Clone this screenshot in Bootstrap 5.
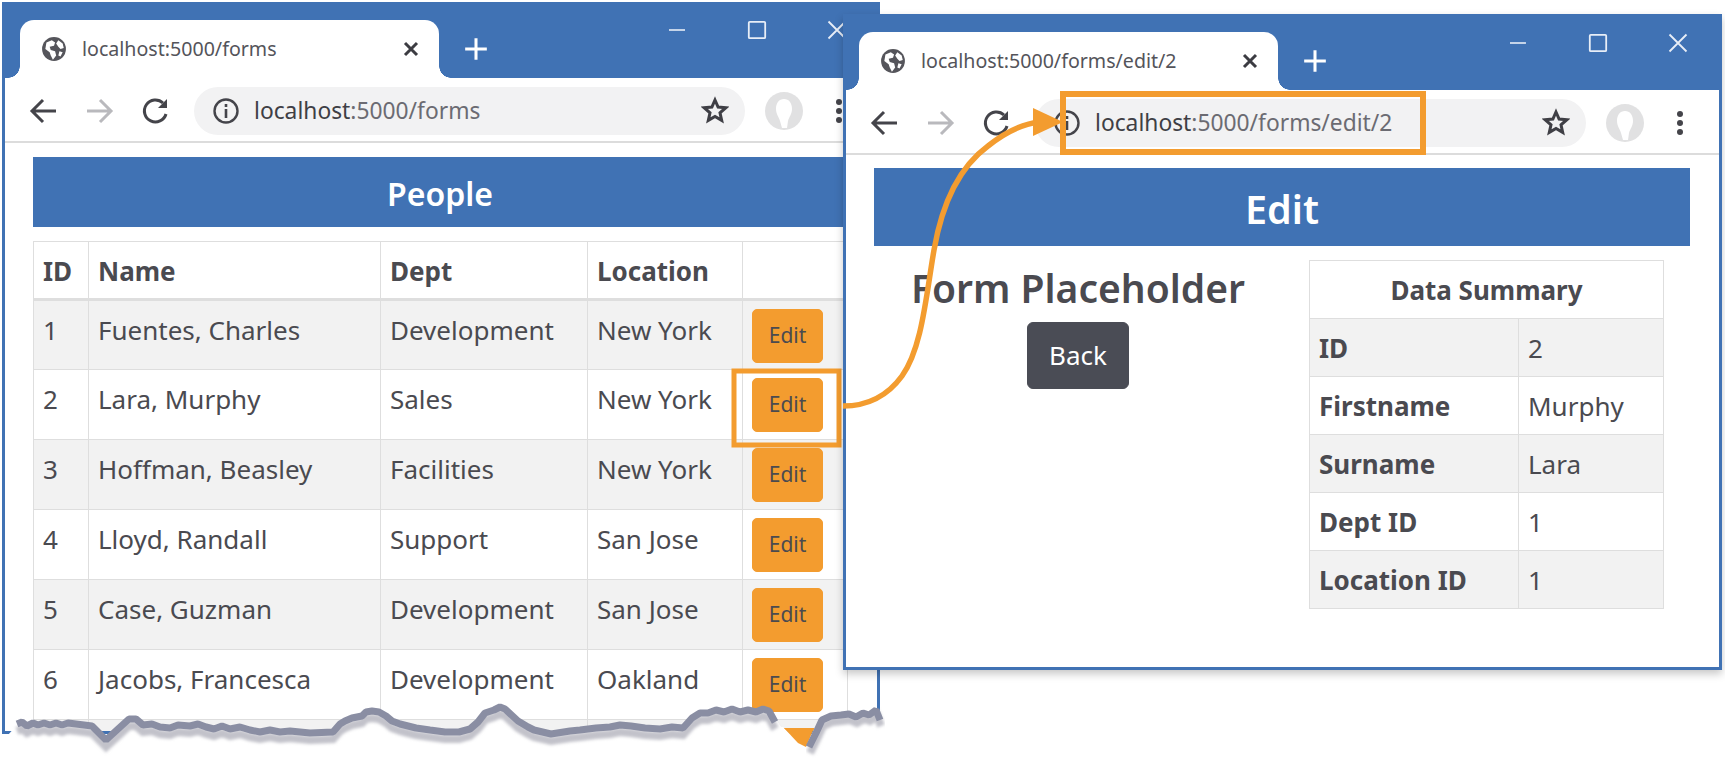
<!DOCTYPE html>
<html lang="en">
<head>
<meta charset="utf-8">
<title>Forms</title>
<link href="https://cdn.jsdelivr.net/npm/bootstrap@5.3.0/dist/css/bootstrap.min.css" rel="stylesheet">
<style>
:root{--chrome:#4072b4;--ink:#4a4a50;--amber:#f39c2f}
html,body{margin:0;background:#fff;overflow:hidden}
body{font-family:"Noto Sans","Open Sans",sans-serif;color:var(--ink)}
.desk{position:relative;width:1725px;height:759px;overflow:hidden}
.win{position:absolute;display:flex;flex-direction:column;background:#fff;border:solid var(--chrome);border-width:0 3px 3px 3px}
.win-a{left:2px;top:2px;width:878px;height:732px}
.win-b{left:843px;top:14px;width:879px;height:656px;box-shadow:0 4px 8px rgba(0,0,0,.22)}
.tabstrip{height:76px;background:var(--chrome);display:flex;align-items:flex-end;flex:none;margin:0 -3px}
.win-a .tabstrip{padding-left:18px}
.win-b .tabstrip{padding-left:16px;height:76px}
.tabx{position:relative;width:419px;height:58px;background:#fff;border-radius:14px 14px 0 0;display:flex;align-items:center;padding:0 16px 0 22px;font-size:19.600px;color:#54545a;flex:none}
.tabx::before,.tabx::after{content:"";position:absolute;bottom:0;width:12px;height:12px}
.tabx::before{left:-12px;background:radial-gradient(circle at 0 0,var(--chrome) 11.5px,#fff 12px)}
.tabx::after{right:-12px;background:radial-gradient(circle at 100% 0,var(--chrome) 11.5px,#fff 12px)}
.tabx .fav{width:26px;height:26px;margin-right:15px;margin-left:-1px;margin-top:-1px;flex:none}
.tabx .ttl{flex:1;white-space:nowrap}
.newtab{margin:0 0 16px 24px;width:26px;height:26px;flex:none}
.winctl{margin-left:auto;display:flex;align-self:flex-start;gap:56px;padding:17px 32px 0 0}
.win-a .winctl{padding-right:31px;padding-top:16px}
.winctl svg{width:24px;height:24px;display:block}
.toolbar{height:65px;flex:none;display:flex;align-items:center;border-bottom:2px solid #dcdcdc;padding:2px 0 0 23px;position:relative}
.tb-ic{width:32px;height:32px;flex:none;margin-right:24px}
.tb-fwd{margin-left:-1px}
.tb-rel{margin-left:1px}
.pill{flex:none;width:551px;height:48px;border-radius:24px;background:#f2f2f3;display:flex;align-items:center;padding:0 16px 0 18px;margin-left:-2px;font-size:22.800px;color:#3f3f45}
.pill .info{width:28px;height:28px;margin-right:14px;flex:none}
.pill .addr{flex:1;white-space:nowrap;padding-top:1px}
.pill .addr span{color:#6b6b72}
.pill .stx{width:28px;height:28px;flex:none;margin-top:-2px}
.prof{width:40px;height:40px;margin-left:19px;flex:none}
.dots{width:24px;height:32px;margin-left:23px;flex:none}
.pagearea{padding:14px 30px 0 28px;flex:1;min-height:0;overflow:hidden}
.win-b .pagearea{padding:13px 29px 0 28px}
.banner{background:var(--chrome);color:#fff;text-align:center;font-weight:600;display:flex;align-items:center;justify-content:center}
.win-a .banner{height:70px;font-size:32px;margin-bottom:14px;padding-top:4px}
.win-b .banner{height:78px;font-size:39.500px;margin-bottom:14px;padding-top:6px}
.tbl{table-layout:fixed;margin:0;color:var(--ink);--bs-table-color:var(--ink);--bs-table-striped-color:var(--ink);--bs-table-striped-bg:#f2f2f2;--bs-table-border-color:#dedede;border-width:2px;border-color:#dedede}
.tbl>*>*>*{border-width:1px 2px 2px 1px;border-color:#dedede}
.people{width:815px;font-size:26px}
.people th,.people td{height:70px;padding:13px 9px 11px;line-height:32px;vertical-align:top}
.people thead th{height:58px;padding:13px 9px 5px;font-weight:700;border-bottom-width:3px}
.people td:last-child{padding:8px 9px 5px}
.cid{width:55px}.cname{width:292px}.cdept{width:207px}.cloc{width:155px}
.btn-edit{--bs-btn-bg:var(--amber);--bs-btn-border-color:var(--amber);--bs-btn-color:#4a4a50;--bs-btn-hover-bg:var(--amber);--bs-btn-hover-border-color:var(--amber);--bs-btn-hover-color:#4a4a50;width:71px;height:54px;font-size:21px;padding:0;border-radius:5px;display:flex;align-items:center;justify-content:center}
.split{display:flex;gap:27px}
.formside{width:408px;flex:none;text-align:center}
.formside h2{font-size:39px;font-weight:600;margin:0 0 6px;line-height:56px;color:var(--ink)}
.btn-back{--bs-btn-bg:#4a4c55;--bs-btn-border-color:#4a4c55;--bs-btn-color:#fff;--bs-btn-hover-bg:#4a4c55;--bs-btn-hover-border-color:#4a4c55;--bs-btn-hover-color:#fff;width:102px;height:67px;font-size:26px;padding:0;border-radius:6px;display:inline-flex;align-items:center;justify-content:center}
.summary{width:355px;font-size:26px;flex:none}
.summary th,.summary td{height:58px;padding:9px 9px;line-height:36px;vertical-align:middle}
.summary thead th{text-align:center}
.col-k{width:209px}
.overlay{position:absolute;left:0;top:0;pointer-events:none}
</style>
</head>
<body>
<svg width="0" height="0" class="position-absolute">
<defs>
<symbol id="i-globe" viewBox="0 0 24 24"><circle cx="12" cy="12" r="11" fill="#55555b"/><path d="M5 6l5-2 3 2-1 3-4 1 1 3 4 1 1 4-3 4-2-4-1-3-4-3zM16 4l4 3 1 4-3 1-2-2-2-3zM17 14l3 1-2 4-2-1z" fill="#fff"/></symbol>
<symbol id="i-close" viewBox="0 0 24 24"><path d="M6 6l12 12M18 6L6 18" stroke="#3c3c42" stroke-width="3" fill="none"/></symbol>
<symbol id="i-plus" viewBox="0 0 24 24"><path d="M12 2v20M2 12h20" stroke="#fff" stroke-width="2.800" fill="none"/></symbol>
<symbol id="i-min" viewBox="0 0 24 24"><path d="M4 12h16" stroke="#e8eef7" stroke-width="1.6"/></symbol>
<symbol id="i-max" viewBox="0 0 24 24"><rect x="3.800" y="3.800" width="16.400" height="16.400" rx="1" fill="none" stroke="#e8eef7" stroke-width="1.800"/></symbol>
<symbol id="i-x" viewBox="0 0 24 24"><path d="M3.500 3.500l17 17M20.500 3.500l-17 17" stroke="#e8eef7" stroke-width="1.800" fill="none"/></symbol>
<symbol id="i-back" viewBox="0 0 32 32"><path d="M28 16H5M15 5L4 16l11 11" stroke="#44444a" stroke-width="3" fill="none"/></symbol>
<symbol id="i-fwd" viewBox="0 0 32 32"><path d="M4 16h23M17 5l11 11-11 11" stroke="#b9b9bd" stroke-width="3" fill="none"/></symbol>
<symbol id="i-reload" viewBox="0 0 32 32"><path d="M26 19a11 11 0 1 1-3-11" stroke="#44444a" stroke-width="3" fill="none"/><path d="M27 4v9H18z" fill="#44444a"/></symbol>
<symbol id="i-info" viewBox="0 0 28 28"><circle cx="14" cy="14" r="11.5" fill="none" stroke="#44444a" stroke-width="2.4"/><path d="M14 12v9M14 7v3" stroke="#44444a" stroke-width="2.6"/></symbol>
<symbol id="i-star" viewBox="0 0 28 28"><path d="M14 4l3.100 7 7.700.7-5.800 5.100 1.700 7.600-6.700-4-6.700 4 1.700-7.600-5.800-5.100 7.700-.7z" fill="none" stroke="#3f3f45" stroke-width="3"/></symbol>
<symbol id="i-prof" viewBox="0 0 40 40"><circle cx="20" cy="20" r="19" fill="#e1e1e2"/><path d="M20 8c5 0 8 4 8 10 0 5-3 8-4 12l-1 7h-5l-2-7c-1-4-4-7-4-12 0-6 3-10 8-10z" fill="#fff"/></symbol>
<symbol id="i-dots" viewBox="0 0 24 32"><circle cx="12" cy="7" r="3" fill="#44444a"/><circle cx="12" cy="16" r="3" fill="#44444a"/><circle cx="12" cy="25" r="3" fill="#44444a"/></symbol>
<polyline id="tear-a" points="17,721 22,719 27,723 33,720 38,722 44,720 50,722 56,720 62,722 68,720 76,721 92,723 106,737 118,726 129,716 136,716 143,722 152,721 160,724 170,725 178,722 190,723 198,721 206,724 214,726 222,723 230,726 240,724 250,727 260,729 270,727 280,729 290,728 310,730 333,729 340,721 345,718 352,715 362,713 366,709 372,708 379,709 386,713 392,718 400,721 408,723 416,725 430,727 445,729 459,729 470,726 478,719 485,710 494,707 500,704 505,706 518,718 528,724 534,727 551,731 570,728 580,727 596,725 610,724 620,722 631,723 645,725 660,726 672,724 683,725 692,715 700,710 708,710 716,707 724,709 732,706 740,709 748,707 756,709 763,706 769,708 775,719"/>
<polyline id="tear-b" points="808,744 815,730 821,717 830,713 840,712 848,711 855,714 862,710 868,712 875,707 879,717"/>
</defs>
</svg>

<div class="desk">

  <section class="win win-a">
    <div class="tabstrip">
      <div class="tabx"><svg class="fav"><use href="#i-globe"/></svg><span class="ttl">localhost:5000/forms</span><svg width="24" height="24"><use href="#i-close"/></svg></div>
      <svg class="newtab"><use href="#i-plus"/></svg>
      <div class="winctl"><svg><use href="#i-min"/></svg><svg><use href="#i-max"/></svg><svg><use href="#i-x"/></svg></div>
    </div>
    <div class="toolbar">
      <svg class="tb-ic"><use href="#i-back"/></svg><svg class="tb-ic tb-fwd"><use href="#i-fwd"/></svg><svg class="tb-ic tb-rel"><use href="#i-reload"/></svg>
      <div class="pill"><svg class="info"><use href="#i-info"/></svg><span class="addr">localhost<span>:5000/forms</span></span><svg class="stx"><use href="#i-star"/></svg></div>
      <svg class="prof"><use href="#i-prof"/></svg><svg class="dots"><use href="#i-dots"/></svg>
    </div>
    <div class="pagearea">
      <div class="banner">People</div>
      <table class="table table-striped table-bordered tbl people">
        <colgroup><col class="cid"><col class="cname"><col class="cdept"><col class="cloc"><col></colgroup>
        <thead><tr><th>ID</th><th>Name</th><th>Dept</th><th>Location</th><th></th></tr></thead>
        <tbody>
          <tr><td>1</td><td>Fuentes, Charles</td><td>Development</td><td>New York</td><td><a class="btn btn-edit">Edit</a></td></tr>
          <tr><td>2</td><td>Lara, Murphy</td><td>Sales</td><td>New York</td><td><a class="btn btn-edit">Edit</a></td></tr>
          <tr><td>3</td><td>Hoffman, Beasley</td><td>Facilities</td><td>New York</td><td><a class="btn btn-edit">Edit</a></td></tr>
          <tr><td>4</td><td>Lloyd, Randall</td><td>Support</td><td>San Jose</td><td><a class="btn btn-edit">Edit</a></td></tr>
          <tr><td>5</td><td>Case, Guzman</td><td>Development</td><td>San Jose</td><td><a class="btn btn-edit">Edit</a></td></tr>
          <tr><td>6</td><td>Jacobs, Francesca</td><td>Development</td><td>Oakland</td><td><a class="btn btn-edit">Edit</a></td></tr>
          <tr><td></td><td></td><td></td><td></td><td><a class="btn btn-edit"></a></td></tr>
        </tbody>
      </table>
    </div>
  </section>

  <svg class="overlay" width="1725" height="759" viewBox="0 0 1725 759">
    <defs><filter id="soft" x="-5%" y="-50%" width="110%" height="200%"><feGaussianBlur stdDeviation="1.600"/></filter></defs>
    <polygon fill="#fff" points="0,735 8,735 17,725 40,722 60,721 78,722 92,724 106,738 118,727 129,717 136,717 143,723 170,726 190,724 210,727 230,727 260,730 290,729 310,731 333,730 345,719 362,714 372,709 379,710 392,719 408,724 430,728 459,730 475,723 485,711 494,708 505,707 518,719 534,728 551,732 580,728 631,724 660,727 683,726 692,716 700,711 730,709 769,709 781,727 783,727 800,743 810,738 815,727 821,718 850,713 875,713 881,724 900,724 900,759 0,759"/>
    <polygon fill="#f39c2f" points="784,728 814,728 806,747 798,743"/>
    <use href="#tear-a" transform="translate(0,10)" fill="none" stroke="#c2c2ca" stroke-width="8" filter="url(#soft)"/>
    <use href="#tear-b" transform="translate(2,9)" fill="none" stroke="#c2c2ca" stroke-width="8" filter="url(#soft)"/>
    <use href="#tear-a" transform="translate(0,3)" fill="none" stroke="#8a8ea3" stroke-width="7" stroke-linejoin="bevel"/>
    <use href="#tear-b" transform="translate(1,3)" fill="none" stroke="#8a8ea3" stroke-width="7" stroke-linejoin="bevel"/>
    <rect x="734" y="371" width="105" height="74" fill="none" stroke="#f39c2f" stroke-width="5"/>
  </svg>

  <section class="win win-b">
    <div class="tabstrip">
      <div class="tabx"><svg class="fav"><use href="#i-globe"/></svg><span class="ttl">localhost:5000/forms/edit/2</span><svg width="24" height="24"><use href="#i-close"/></svg></div>
      <svg class="newtab"><use href="#i-plus"/></svg>
      <div class="winctl"><svg><use href="#i-min"/></svg><svg><use href="#i-max"/></svg><svg><use href="#i-x"/></svg></div>
    </div>
    <div class="toolbar">
      <svg class="tb-ic"><use href="#i-back"/></svg><svg class="tb-ic tb-fwd"><use href="#i-fwd"/></svg><svg class="tb-ic tb-rel"><use href="#i-reload"/></svg>
      <div class="pill"><svg class="info"><use href="#i-info"/></svg><span class="addr">localhost<span>:5000/forms/edit/2</span></span><svg class="stx"><use href="#i-star"/></svg></div>
      <svg class="prof"><use href="#i-prof"/></svg><svg class="dots"><use href="#i-dots"/></svg>
    </div>
    <div class="pagearea">
      <div class="banner">Edit</div>
      <div class="split">
        <div class="formside"><h2>Form Placeholder</h2><a class="btn btn-back">Back</a></div>
        <table class="table table-striped table-bordered tbl summary">
          <colgroup><col class="col-k"><col></colgroup>
          <thead><tr><th colspan="2">Data Summary</th></tr></thead>
          <tbody>
            <tr><th>ID</th><td>2</td></tr>
            <tr><th>Firstname</th><td>Murphy</td></tr>
            <tr><th>Surname</th><td>Lara</td></tr>
            <tr><th>Dept ID</th><td>1</td></tr>
            <tr><th>Location ID</th><td>1</td></tr>
          </tbody>
        </table>
      </div>
    </div>
  </section>

  <svg class="overlay" width="1725" height="759" viewBox="0 0 1725 759">
    <rect x="1063" y="94" width="360" height="58" fill="none" stroke="#f39c2f" stroke-width="6"/>
    <path d="M843 406C866 406 886 398 902 376C922 348 926 296 934 250C942 204 958 168 988 146C1003 134 1020 124 1040 122" fill="none" stroke="#f39c2f" stroke-width="5.500"/>
    <polygon fill="#f39c2f" points="1033,108 1063,122 1033,136"/>
  </svg>
</div>
<script src="https://cdn.jsdelivr.net/npm/bootstrap@5.3.0/dist/js/bootstrap.bundle.min.js"></script>
</body>
</html>
